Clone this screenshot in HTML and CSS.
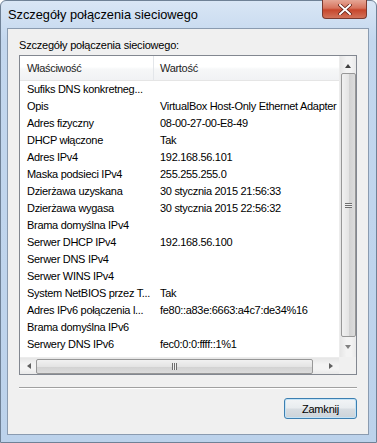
FILE: index.html
```html
<!DOCTYPE html>
<html lang="pl">
<head>
    <meta charset="UTF-8">
    <title>Szczegóły połączenia sieciowego</title>
    <link rel="stylesheet" href="styles.css">
</head>
<body>
    <div class="window">
        <div class="titlebar">
            <span class="title">Szczegóły połączenia sieciowego</span>
            <div class="close-btn">
                <svg width="14" height="11" viewBox="0 0 14 11">
                    <path d="M2 1 L12 10 M12 1 L2 10" stroke="#5a1a10" stroke-width="3.4" stroke-linecap="square"/>
                    <path d="M2 1 L12 10 M12 1 L2 10" stroke="#fff" stroke-width="2" stroke-linecap="square"/>
                </svg>
            </div>
        </div>
        <div class="client">
            <div class="caption">Szczegóły połączenia sieciowego:</div>
            <div class="listview">
                <div class="viewport">
                    <div class="header">
                        <div class="col1">Właściwość</div>
                        <div class="col2">Wartość</div>
                    </div>
                    <div class="row"><div class="col1">Sufiks DNS konkretneg...</div><div class="col2"></div></div>
                    <div class="row"><div class="col1">Opis</div><div class="col2">VirtualBox Host-Only Ethernet Adapter</div></div>
                    <div class="row"><div class="col1">Adres fizyczny</div><div class="col2">08-00-27-00-E8-49</div></div>
                    <div class="row"><div class="col1">DHCP włączone</div><div class="col2">Tak</div></div>
                    <div class="row"><div class="col1">Adres IPv4</div><div class="col2">192.168.56.101</div></div>
                    <div class="row"><div class="col1">Maska podsieci IPv4</div><div class="col2">255.255.255.0</div></div>
                    <div class="row"><div class="col1">Dzierżawa uzyskana</div><div class="col2">30 stycznia 2015 21:56:33</div></div>
                    <div class="row"><div class="col1">Dzierżawa wygasa</div><div class="col2">30 stycznia 2015 22:56:32</div></div>
                    <div class="row"><div class="col1">Brama domyślna IPv4</div><div class="col2"></div></div>
                    <div class="row"><div class="col1">Serwer DHCP IPv4</div><div class="col2">192.168.56.100</div></div>
                    <div class="row"><div class="col1">Serwer DNS IPv4</div><div class="col2"></div></div>
                    <div class="row"><div class="col1">Serwer WINS IPv4</div><div class="col2"></div></div>
                    <div class="row"><div class="col1">System NetBIOS przez T...</div><div class="col2">Tak</div></div>
                    <div class="row"><div class="col1">Adres IPv6 połączenia l...</div><div class="col2">fe80::a83e:6663:a4c7:de34%16</div></div>
                    <div class="row"><div class="col1">Brama domyślna IPv6</div><div class="col2"></div></div>
                    <div class="row"><div class="col1">Serwery DNS IPv6</div><div class="col2">fec0:0:0:ffff::1%1</div></div>
                    <div class="row"><div class="col1"></div><div class="col2">fec0:0:0:ffff::2%1</div></div>
                </div>
                <div class="vscroll">
                    <div class="arrow up"></div>
                    <div class="vthumb"><span class="grip-v"></span></div>
                    <div class="arrow down"></div>
                </div>
                <div class="hscroll">
                    <div class="arrow left"></div>
                    <div class="hthumb"><span class="grip-h"></span></div>
                    <div class="arrow right"></div>
                </div>
                <div class="corner"></div>
            </div>
            <div class="separator"></div>
            <div class="buttons">
                <button class="btn">Zamknij</button>
            </div>
        </div>
    </div>
</body>
</html>
```

FILE: styles.css
```css
body {
    margin: 0;
    background: #fff;
    font-family: "Liberation Sans", Arial, sans-serif;
}
.window {
    width: 377px;
    height: 443px;
    box-sizing: border-box;
    border: 1px solid #6f8196;
    border-radius: 6px 6px 0 0;
    background: linear-gradient(to bottom, #d9e6f5 0, #c3d7ee 40px, #bcd2eb 100%);
    display: flex;
    flex-direction: column;
    padding: 0 7px 7px 6px;
}
.titlebar {
    height: 27px;
    display: flex;
    align-items: flex-start;
    flex-shrink: 0;
}
.title {
    font-family: "Liberation Sans", Arial, sans-serif;
    font-size: 12.8px;
    color: #000;
    margin-top: 6px;
    margin-left: 1px;
}
.close-btn {
    margin-left: auto;
    margin-right: 2px;
    margin-top: -1px;
    width: 45px;
    height: 19px;
    box-sizing: border-box;
    border: 1px solid #7a3a30;
    border-top: none;
    border-radius: 0 0 4px 4px;
    background: linear-gradient(to bottom, #e6a796 0, #d7735d 45%, #c7462c 55%, #d2735a 100%);
    display: flex;
    align-items: center;
    justify-content: center;
}
.client {
    flex: 1;
    background: #f0f0f0;
    border: 1px solid #8a9bb0;
    display: flex;
    flex-direction: column;
    padding: 0 11px 0 11px;
    font-size: 11px;
    color: #000;
}
.caption {
    margin-top: 9px;
    height: 17px;
    line-height: 14px;
    letter-spacing: -0.2px;
}
.listview {
    height: 320px;
    box-sizing: border-box;
    border: 1px solid #828790;
    background: #fff;
    display: grid;
    grid-template-columns: 1fr 17px;
    grid-template-rows: 1fr 17px;
    overflow: hidden;
}
.viewport {
    overflow: hidden;
    white-space: nowrap;
    letter-spacing: -0.3px;
}
.header {
    display: flex;
    height: 24px;
    border-bottom: 1px solid #e5e5e5;
    background: linear-gradient(to bottom, #fff 0, #fff 45%, #f6f7f8 55%, #f1f2f4 100%);
    color: #1e1e1e;
}
.header .col1 {
    border-right: 1px solid #e3e6ea;
    line-height: 25px;
}
.header .col2 {
    line-height: 25px;
}
.row {
    display: flex;
    height: 17px;
    line-height: 17px;
}
.col1 {
    width: 134px;
    box-sizing: border-box;
    padding-left: 7px;
    flex-shrink: 0;
    overflow: hidden;
}
.col2 {
    padding-left: 6px;
    flex-shrink: 0;
}
.vscroll {
    background: linear-gradient(to right, #e6e6e6, #f3f3f3 40%, #f3f3f3 70%, #e9e9e9);
    border-left: 1px solid #ececec;
    display: flex;
    flex-direction: column;
    align-items: center;
}
.hscroll {
    background: linear-gradient(to bottom, #e6e6e6, #f3f3f3 40%, #f3f3f3 70%, #e9e9e9);
    border-top: 1px solid #ececec;
    display: flex;
    align-items: center;
}
.corner {
    background: #f0f0f0;
}
.arrow {
    width: 0;
    height: 0;
    flex-shrink: 0;
}
.arrow.up {
    margin: 8px 0 5px;
    border-left: 3px solid transparent;
    border-right: 3px solid transparent;
    border-bottom: 4px solid #404040;
}
.arrow.down {
    margin: 8px 0 8px;
    border-left: 3px solid transparent;
    border-right: 3px solid transparent;
    border-top: 4px solid #808080;
}
.arrow.left {
    margin: 0 5px 0 7px;
    border-top: 3px solid transparent;
    border-bottom: 3px solid transparent;
    border-right: 4px solid #606060;
}
.arrow.right {
    margin: 0 6px 0 auto;
    border-top: 3px solid transparent;
    border-bottom: 3px solid transparent;
    border-left: 4px solid #606060;
}
.vthumb {
    width: 15px;
    height: 264px;
    box-sizing: border-box;
    border: 1px solid #979797;
    border-radius: 2px;
    background: linear-gradient(to right, #f1f1f1, #e4e4e4 50%, #d2d2d2 55%, #dcdcdc);
    display: flex;
    align-items: center;
    justify-content: center;
}
.grip-v {
    width: 7px;
    height: 5px;
    background: repeating-linear-gradient(to bottom, #6e6e6e 0, #6e6e6e 1px, #f0f0f0 1px, #f0f0f0 2px);
}
.hthumb {
    width: 277px;
    height: 15px;
    box-sizing: border-box;
    border: 1px solid #979797;
    border-radius: 2px;
    background: linear-gradient(to bottom, #f1f1f1, #e4e4e4 50%, #d2d2d2 55%, #dcdcdc);
    display: flex;
    align-items: center;
    justify-content: center;
}
.grip-h {
    width: 5px;
    height: 7px;
    background: repeating-linear-gradient(to right, #6e6e6e 0, #6e6e6e 1px, #f0f0f0 1px, #f0f0f0 2px);
}
.separator {
    margin-top: 12px;
    height: 0;
    border-top: 1px solid #a0a0a0;
    border-bottom: 1px solid #fff;
}
.buttons {
    display: flex;
    justify-content: flex-end;
    margin-top: 9px;
}
.btn {
    width: 73px;
    height: 21px;
    border: 1px solid #3c7fb1;
    border-radius: 3px;
    background: linear-gradient(to bottom, #f2f4f6 0, #e8ecef 48%, #d8dde2 52%, #ccd3d9 100%);
    font-family: "Liberation Sans", Arial, sans-serif;
    font-size: 11px;
    letter-spacing: -0.2px;
    color: #000;
    padding: 0;
    box-shadow: inset 0 0 0 1px #c4e3f6;
}
```
